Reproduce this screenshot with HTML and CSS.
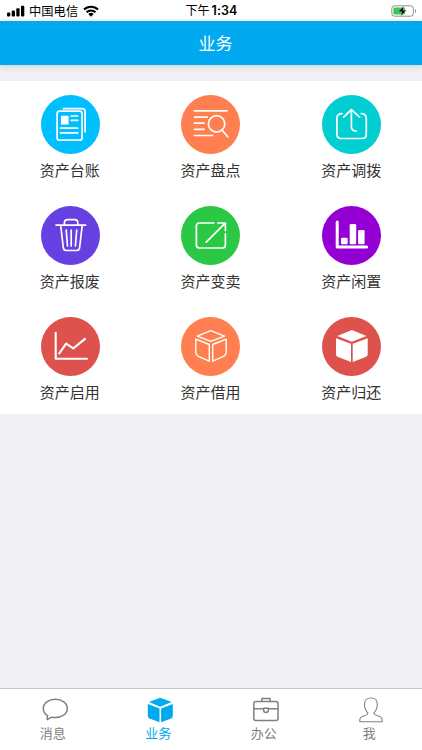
FILE: index.html
```html
<!DOCTYPE html>
<html lang="zh-CN">

<head>
    <meta charset="UTF-8">
    <meta name="viewport" content="width=device-width, initial-scale=1">
    <title>业务</title>
    <link rel="stylesheet" href="styles.css">
</head>

<body>
    <!-- Status bar -->
    <div class="status">
        <div class="status-left">
            <svg class="signal" width="18" height="12" viewBox="0 0 18 12">
                <rect x="0" y="7.5" width="3.3" height="4" rx="1"/>
                <rect x="4.7" y="5.5" width="3.3" height="6" rx="1"/>
                <rect x="9.3" y="3.2" width="3.3" height="8.3" rx="1"/>
                <rect x="14" y="0.7" width="3.3" height="10.8" rx="1"/>
            </svg>
            <span class="carrier">中国电信</span>
            <svg class="wifi" width="16" height="12" viewBox="0 0 16 12">
                <path d="M1 4.600a10 10 0 0 1 14 0M3.500 7.300a6.400 6.400 0 0 1 9 0" fill="none" stroke="#000" stroke-width="2.1"/>
                <path d="M5.300 9.100a3.900 3.900 0 0 1 5.400 0L8 11.800z"/>
            </svg>
        </div>
        <span class="time">下午<b>1:34</b></span>
        <svg class="battery" width="26" height="12" viewBox="0 0 26 12">
            <rect x="0.8" y="0.8" width="21.6" height="10.4" rx="2.8" fill="#fff" stroke="#8f8f8f"/>
            <rect x="2.4" y="2.4" width="11.6" height="7.2" rx="1.4" fill="#34c759"/>
            <path d="M24 4v4q1.2-.6 1.2-2T24 4z" fill="#8f8f8f"/>
            <path d="M13 1L7.200 6.700h3.700L9.700 11l5.800-5.700h-3.700z" stroke="#fff" stroke-width=".3"/>
        </svg>
    </div>

    <header class="header">业务</header>

    <!-- Menu grid -->
    <main class="content">
        <div class="grid">
            <a class="item">
                <svg class="icon sky" viewBox="0 0 59 59">
                    <path d="M22.500 13.700h18.700q2.900 0 2.900 2.900v20.200"/>
                    <rect x="16.1" y="16.2" width="25" height="29" rx="2.5"/>
                    <path class="solid" d="M20 20.700h7.600v8.700H20z"/>
                    <path d="M30.200 21h6.500M30.200 25.300h6.500M19.500 33.200h17.200M19.500 37.800h17.200"/>
                </svg>
                <span>资产台账</span>
            </a>
            <a class="item">
                <svg class="icon orange" viewBox="0 0 59 59">
                    <path d="M13.500 15.900H46M13.500 22.100h12.700M13.500 28.200H23M13.500 34.300H23M13.500 40.500h18.200"/>
                    <circle cx="35.6" cy="28.9" r="8.2"/>
                    <path d="M41.200 35.300l5.500 6.500"/>
                </svg>
                <span>资产盘点</span>
            </a>
            <a class="item">
                <svg class="icon teal" viewBox="0 0 59 59">
                    <path d="M19.900 18.600q-5 0-5 5v15.600q0 4.300 4.300 4.300H40q4.300 0 4.300-4.300V23.600q0-5-5-5"/>
                    <path d="M21.600 22.200l7.800-7.600 8.200 7.600M29.400 15v16.500q0 4.500 4.700 4.700"/>
                </svg>
                <span>资产调拨</span>
            </a>
            <a class="item">
                <svg class="icon purple" viewBox="0 0 59 59">
                    <path d="M15 19.100h29.600M23.400 19v-2.200q0-3.200 3.200-3.200h7q3.200 0 3.200 3.200V19"/>
                    <path d="M19.700 19.500l2.600 22.200q.3 2.800 3 2.800h10.300q2.700 0 3-2.800l2.600-22.200M25.200 24l1.300 16M30.200 24v16M35.700 24l-1.300 16"/>
                </svg>
                <span>资产报废</span>
            </a>
            <a class="item">
                <svg class="icon green" viewBox="0 0 59 59">
                    <path d="M32.800 17H18.400q-3 0-3 3v19q0 3 3 3h23q3 0 3-3V27.800"/>
                    <path d="M25.200 36.200l19-19M36.800 17h7.600v7.600"/>
                </svg>
                <span>资产变卖</span>
            </a>
            <a class="item">
                <svg class="icon violet" viewBox="0 0 59 59">
                    <path class="thick" d="M15.200 16v25h29.500"/>
                    <rect class="solid" x="19" y="31.7" width="6.7" height="6.6" rx="1.3"/>
                    <rect class="solid" x="27.7" y="18" width="6.5" height="20.3" rx="1.3"/>
                    <rect class="solid" x="36.1" y="24" width="6.5" height="14.3" rx="1.3"/>
                </svg>
                <span>资产闲置</span>
            </a>
            <a class="item">
                <svg class="icon red" viewBox="0 0 59 59">
                    <path class="medium" d="M14.700 15.700v26H46M18.300 36.300l6.800-9.700 7.200 4.800L44 21.900"/>
                </svg>
                <span>资产启用</span>
            </a>
            <a class="item">
                <svg class="icon orange" viewBox="0 0 59 59">
                    <path class="thin" d="M16.300 19.200l13.500-5.600 13.700 5.600-13.700 5.200zM14.800 22.200l13.500 5.300v16.700l-9.800-4.300q-3.700-1.700-3.700-5.200zM45.200 22.200l-13.500 5.300v16.700l9.800-4.300q3.700-1.700 3.700-5.200z"/>
                </svg>
                <span>资产借用</span>
            </a>
            <a class="item">
                <svg class="icon red" viewBox="0 0 59 59">
                    <path class="solid" d="M15.300 19l14.500-6 14.700 6-14.700 5.700zM14 21.300l15 5.400V45l-13.500-5.300q-1.500-.6-1.500-2.200zM45.700 21.300l-15 5.400V45l13.500-5.300q1.500-.6 1.500-2.200z"/>
                </svg>
                <span>资产归还</span>
            </a>
        </div>
    </main>

    <!-- Bottom tabs -->
    <nav class="tabs">
        <a class="tab">
            <svg viewBox="0 0 28 28">
                <path d="M6.500 20.600C3.800 18.800 2.300 16.300 2.300 13.400c0-5.300 5.300-9.200 12-9.200s12 3.900 12 9.200-5.300 9.200-12 9.200c-1.300 0-2.500-.1-3.600-.4L6.200 24.700z"/>
            </svg>
            <span>消息</span>
        </a>
        <a class="tab active">
            <svg viewBox="0 0 28 28">
                <path d="M3 7.100l11.200-4.300 11.400 4.300-11.400 4.600zM1.800 8.900l11.700 4.500v13.900L3.500 23.400q-1.700-.7-1.700-2.500zM26.800 8.900l-11.700 4.500v13.900l10-3.900q1.700-.7 1.700-2.500z"/>
            </svg>
            <span>业务</span>
        </a>
        <a class="tab">
            <svg viewBox="0 0 28 28">
                <rect x="1.8" y="6.5" width="24.2" height="19" rx="2"/>
                <path d="M9.800 6.300V3.500h8.300v2.800M2 13.700h9.600m4.800 0H26M11.600 13.200v1.900q0 2.500 2.400 2.500t2.400-2.500v-1.900z"/>
            </svg>
            <span>办公</span>
        </a>
        <a class="tab">
            <svg class="user" viewBox="0 0 28 28">
                <path d="M10.900 18c-1.300-1.300-3.400-5-3.400-9 0-3.800 2.400-6 6.400-6s6.400 2.200 6.400 6c0 4-2.100 7.700-3.400 9 .3 2 2 2.400 4.500 3 2.800.7 3.700 1.700 3.700 4v1.700H2.800V25c0-2.300.9-3.300 3.700-4 2.500-.6 4.100-1 4.400-3z"/>
            </svg>
            <span>我</span>
        </a>
    </nav>
</body>

</html>
```
FILE: styles.css
```css
* {
    box-sizing: border-box;
}

body {
    display: flex;
    flex-direction: column;
    height: 750px;
    margin: 0;
    background: #efeff4;
    color: #333;
    font-family: "Noto Sans CJK SC", sans-serif;
}

svg {
    display: block;
    flex: none;
}

/* status bar */
.status {
    display: grid;
    grid-template-columns: 1fr auto 1fr;
    align-items: center;
    height: 21px;
    padding: 0 6px 0 7px;
    background: #fff;
    color: #000;
    font-size: 12px;
    line-height: 20px;
}

.status-left {
    display: flex;
    align-items: center;
}

.carrier {
    margin: 0 5px 0 4px;
    font-size: 12.3px;
}

.time b {
    margin-left: 2px;
    font-family: Inter, sans-serif;
    font-size: 12.5px;
    font-weight: 600;
    letter-spacing: 0.1px;
}

.battery {
    justify-self: end;
    margin-right: -1px;
}

/* title bar */
.header {
    height: 44px;
    padding-left: 9px;
    background: #00a9f0;
    box-shadow: 0 1px 6px #ccc;
    color: #fff;
    font-size: 17px;
    line-height: 44px;
    text-align: center;
}

/* menu */
.content {
    flex: 1;
    padding-top: 16px;
}

.grid {
    display: grid;
    grid-template-columns: repeat(3, 1fr);
    grid-auto-rows: 111px;
    background: #fff;
}

.item {
    display: flex;
    flex-direction: column;
    align-items: center;
    padding-top: 14px;
    font-size: 15px;
    line-height: 22px;
}

.item span {
    margin: 5px 1px 0 0;
}

.icon {
    width: 59px;
    height: 59px;
    border-radius: 50%;
    fill: none;
    stroke: #fff;
    stroke-width: 1.7;
    stroke-linecap: round;
    stroke-linejoin: round;
}

.icon .solid {
    fill: #fff;
    stroke: none;
}

.icon .thick {
    stroke-width: 3;
}

.icon .medium {
    stroke-width: 2.1;
}

.icon .thin {
    stroke-width: 1.4;
}

.sky { background: #00bfff; }
.orange { background: #ff7f50; }
.teal { background: #00ced1; }
.purple { background: #6640e0; }
.green { background: #2ac845; }
.violet { background: #9400d3; }
.red { background: #dd524d; }

/* bottom tabs */
.tabs {
    display: flex;
    height: 62px;
    border-top: 1px solid #c4c4c6;
    background: #fff;
}

.tab {
    display: flex;
    flex: 1;
    flex-direction: column;
    align-items: center;
    padding-top: 6px;
    color: #808080;
    font-size: 13px;
    line-height: 20px;
}

.tab svg {
    width: 28px;
    height: 28px;
    margin-left: 4px;
    fill: none;
    stroke: #808080;
    stroke-width: 1.5;
    stroke-linejoin: round;
}

.tab .user {
    stroke-width: 1.1;
}

.active {
    color: #00a9f0;
}

.tab.active svg {
    fill: #00a9f0;
    stroke: none;
}
```
